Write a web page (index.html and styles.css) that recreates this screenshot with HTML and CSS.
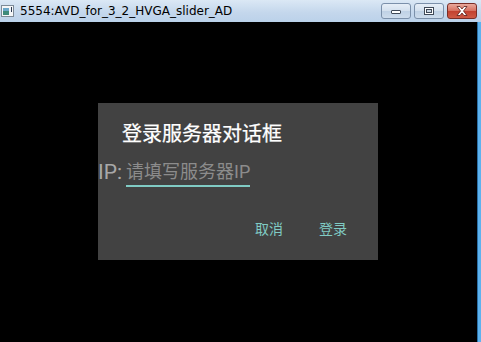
FILE: index.html
```html
<!DOCTYPE html>
<html lang="zh">
<head>
<meta charset="utf-8">
<title>5554:AVD_for_3_2_HVGA_slider_AD</title>
<link rel="stylesheet" href="styles.css">
</head>
<body>
<div class="window">
  <div class="titlebar">
    <svg class="app-icon" width="14" height="14" viewBox="0 0 14 14">
      <rect x="0.5" y="1.5" width="12" height="11" fill="#f4f6f8" stroke="#7d8a96"/>
      <rect x="2" y="4" width="6" height="7" fill="#3e8a7a"/>
      <rect x="2" y="4" width="6" height="3" fill="#6aa7c9"/>
      <rect x="10" y="3" width="1" height="5" fill="#2d3b52"/>
    </svg>
    <span class="win-title">5554:AVD_for_3_2_HVGA_slider_AD</span>
    <div class="controls">
      <div class="ctl">
        <svg width="14" height="8" viewBox="0 0 14 8"><rect x="2.5" y="3.5" width="9" height="3" rx="0.5" fill="#fff" stroke="#404a58"/></svg>
      </div>
      <div class="ctl">
        <svg width="14" height="12" viewBox="0 0 14 12"><rect x="2.5" y="2.5" width="9" height="7" fill="#fff" stroke="#404a58"/><rect x="4.5" y="4.5" width="5" height="3" fill="#c9d6e4" stroke="#404a58"/></svg>
      </div>
      <div class="ctl close">
        <svg width="16" height="12" viewBox="0 0 16 12"><path d="M3 1.5h3l2 2.5 2-2.5h3l-3.5 4.5 3.5 4.5h-3l-2-2.5-2 2.5h-3l3.5-4.5z" fill="#fff" stroke="#5a1d18" stroke-width="0.8"/></svg>
      </div>
    </div>
  </div>
  <div class="screen">
    <div class="dialog">
      <div class="dlg-title">登录服务器对话框</div>
      <div class="ip-row">
        <span class="ip-label">IP:</span>
        <div class="ip-input"><span class="hint">请填写服务器IP</span></div>
      </div>
      <div class="actions">
        <span class="btn">取消</span>
        <span class="btn">登录</span>
      </div>
    </div>
  </div>
</div>
</body>
</html>
```
FILE: styles.css
```css
html, body {
  margin: 0;
  padding: 0;
  background: #000;
}
.window {
  width: 481px;
  height: 342px;
  display: flex;
  flex-direction: column;
  overflow: hidden;
}
.titlebar {
  height: 22px;
  flex: none;
  display: flex;
  align-items: center;
  background: linear-gradient(#dbe8f5, #c4d7ec 60%, #bcd2ea);
  box-sizing: border-box;
  border-bottom: 1px solid #b9d1ea;
}
.app-icon {
  margin-left: 1px;
  flex: none;
}
.win-title {
  margin-left: 5px;
  font-family: "DejaVu Sans", sans-serif;
  font-size: 12px;
  color: #000;
  white-space: nowrap;
  flex: 1;
}
.controls {
  display: flex;
  align-self: flex-start;
  margin-top: 3px;
  margin-right: 4px;
  gap: 3px;
}
.ctl {
  width: 30px;
  height: 16px;
  box-sizing: border-box;
  border: 1px solid #7b90aa;
  border-radius: 3px;
  background: linear-gradient(#e6eef7, #d3e0ee 50%, #bfd1e5 51%, #cddcec);
  display: flex;
  align-items: center;
  justify-content: center;
}
.ctl.close {
  border-color: #7a2e27;
  background: linear-gradient(#e9a99c, #d66f5e 50%, #c2412f 51%, #cf5a45);
}
.screen {
  flex: 1;
  background: #000;
  border-right: 3px solid #5db2ef;
  box-shadow: inset -1px 0 0 #2a6fa5;
}
.dialog {
  margin: 81px 0 0 98px;
  width: 280px;
  height: 157px;
  background: #424242;
  box-sizing: border-box;
  padding-top: 17px;
  display: flex;
  flex-direction: column;
  box-shadow: 1px 1px 2px rgba(0,0,0,0.5);
}
.dlg-title {
  padding-left: 24px;
  font-family: Roboto, "Noto Sans CJK SC", sans-serif;
  font-size: 20px;
  line-height: 28px;
  color: #fff;
  -webkit-text-stroke: 0.25px #fff;
}
.ip-row {
  margin-top: 13px;
  display: flex;
  align-items: flex-start;
}
.ip-label {
  font-family: Roboto, "Noto Sans CJK SC", sans-serif;
  font-size: 21px;
  line-height: 22px;
  color: #a8a8a8;
}
.ip-input {
  margin-left: 4px;
  width: 124px;
  padding-bottom: 2px;
  border-bottom: 2px solid #80cbc4;
}
.hint {
  font-family: Roboto, "Noto Sans CJK SC", sans-serif;
  font-size: 18px;
  line-height: 22px;
  color: #8c8c8c;
  white-space: nowrap;
}
.actions {
  margin-top: 32px;
  display: flex;
  justify-content: flex-end;
  gap: 36px;
  padding-right: 31px;
}
.btn {
  font-family: Roboto, "Noto Sans CJK SC", sans-serif;
  font-size: 14px;
  line-height: 20px;
  color: #80cbc4;
}
```
